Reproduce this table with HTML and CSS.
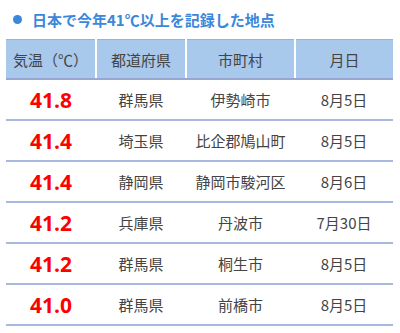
FILE: index.html
```html
<!DOCTYPE html>
<html lang="ja">
<head>
    <meta charset="UTF-8">
    <title>日本で今年41℃以上を記録した地点</title>
    <link rel="stylesheet" href="styles.css">
</head>
<body>
    <h2 class="title"><span class="dot"></span>日本で今年41℃以上を記録した地点</h2>

    <table class="temps">
        <colgroup>
            <col class="c1"><col class="c2"><col class="c3"><col class="c4">
        </colgroup>
        <tr>
            <th>気温（℃）</th>
            <th>都道府県</th>
            <th>市町村</th>
            <th>月日</th>
        </tr>
        <tr><td class="num">41.8</td><td>群馬県</td><td>伊勢崎市</td><td>8月5日</td></tr>
        <tr><td class="num">41.4</td><td>埼玉県</td><td>比企郡鳩山町</td><td>8月5日</td></tr>
        <tr><td class="num">41.4</td><td>静岡県</td><td>静岡市駿河区</td><td>8月6日</td></tr>
        <tr><td class="num">41.2</td><td>兵庫県</td><td>丹波市</td><td>7月30日</td></tr>
        <tr><td class="num">41.2</td><td>群馬県</td><td>桐生市</td><td>8月5日</td></tr>
        <tr><td class="num">41.0</td><td>群馬県</td><td>前橋市</td><td>8月5日</td></tr>
    </table>
</body>
</html>
```

FILE: styles.css
```css
body {
    margin: 0;
    padding: 9px 7px 0 6px;
    background: #fff;
    font-family: "Noto Sans CJK JP", "Noto Sans", sans-serif;
    color: #444;
}

.title {
    display: flex;
    align-items: center;
    margin: 0 0 9px 0;
    padding-left: 7px;
    height: 21px;
    font-size: 15px;
    font-weight: bold;
    color: #3b87da;
}

.dot {
    width: 9px;
    height: 9px;
    border-radius: 50%;
    background: #3b87da;
    margin-right: 10px;
}

.temps {
    width: 387px;
    border-collapse: collapse;
    table-layout: fixed;
}

.c1 { width: 90px; }
.c2 { width: 90px; }
.c3 { width: 109px; }
.c4 { width: 98px; }

th {
    height: 38px;
    padding: 0;
    background: #a8c8ec;
    border-top: 1px solid #9eb0d8;
    border-bottom: 2px solid #97a7d1;
    border-left: 2px solid #fff;
    font-size: 15px;
    font-weight: normal;
    color: #444;
    text-align: center;
}

th:first-child {
    border-left: none;
}

td {
    height: 39px;
    padding: 0;
    border-bottom: 2px solid #a9b8e0;
    font-size: 15px;
    text-align: center;
    color: #444;
}

td.num {
    font-family: "Open Sans", "Noto Sans", sans-serif;
    font-size: 21px;
    font-weight: bold;
    color: #ff0000;
}
```
